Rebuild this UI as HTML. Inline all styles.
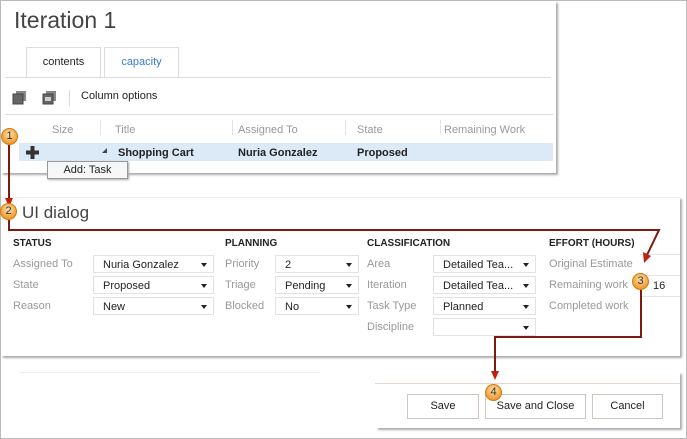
<!DOCTYPE html>
<html><head><meta charset="utf-8"><style>
*{box-sizing:border-box;margin:0;padding:0}
body{width:687px;height:439px;background:#fff;position:relative;overflow:hidden;font-family:"Liberation Sans",sans-serif;font-size:11px;color:#222}
.a{position:absolute;white-space:nowrap}
.frame{left:0;top:0;width:687px;height:439px;border:1px solid #bbb}
.lbl{color:#999;font-size:11px}
.hd{font-weight:bold;font-size:10px;color:#222}
.dd{position:absolute;height:18px;border:1px solid #e2e2e2;font-size:11px;padding:3px 0 0 9px;color:#222}
.dd:after{content:"";position:absolute;right:6px;top:7px;border-left:3px solid transparent;border-right:3px solid transparent;border-top:4px solid #222}
.btn{position:absolute;top:394px;height:25px;border:1px solid #cfc6bd;background:#fff;text-align:center;line-height:23px;font-size:11px;color:#222}
.num{position:absolute;width:17px;height:17px;border-radius:50%;background:radial-gradient(circle at 50% 35%,#fde3b0,#f4a644 60%,#e08a20);border:1px solid #d07a10;font-size:11px;text-align:center;line-height:15px;color:#333}
</style></head><body>
<div class="a frame"></div>
<!-- panel 1 -->
<div class="a" style="left:1px;top:1px;width:555px;height:172px;background:#fff;box-shadow:2px 2px 2px #aaa"></div>
<div class="a" style="left:14px;top:7px;font-size:23px;color:#444">Iteration 1</div>
<div class="a" style="left:26px;top:47px;width:75px;height:31px;border:1px solid #ddd;border-bottom:none;background:#fff;text-align:center;line-height:29px;font-size:11px">contents</div>
<div class="a" style="left:104px;top:47px;width:75px;height:30px;border:1px solid #ddd;border-bottom:none;text-align:center;line-height:29px;font-size:11px;color:#3a7bd5">capacity</div>
<div class="a" style="left:5px;top:77px;width:546px;height:1px;background:#ddd"></div>
<svg class="a" style="left:12px;top:90px" width="50" height="16">
<rect x="4" y="1" width="10" height="10" fill="#888"/><rect x="1" y="4" width="10" height="10" fill="#666" stroke="#444"/>
<rect x="34" y="1" width="10" height="10" fill="#888"/><rect x="31" y="4" width="10" height="10" fill="#666" stroke="#444"/><rect x="33" y="7" width="6" height="4" fill="#ccc"/>
</svg>
<div class="a" style="left:69px;top:90px;width:1px;height:16px;background:#ddd"></div>
<div class="a" style="left:81px;top:90px;font-size:11px">Column options</div>
<div class="a" style="left:5px;top:114px;width:548px;height:1px;background:#ddd"></div>
<div class="a lbl" style="left:52px;top:124px">Size</div>
<div class="a" style="left:100px;top:120px;width:1px;height:15px;background:#e4e4e4"></div>
<div class="a lbl" style="left:115px;top:124px">Title</div>
<div class="a" style="left:232px;top:120px;width:1px;height:15px;background:#e4e4e4"></div>
<div class="a lbl" style="left:238px;top:124px">Assigned To</div>
<div class="a" style="left:345px;top:120px;width:1px;height:15px;background:#e4e4e4"></div>
<div class="a lbl" style="left:357px;top:124px">State</div>
<div class="a" style="left:440px;top:120px;width:1px;height:15px;background:#e4e4e4"></div>
<div class="a lbl" style="left:444px;top:124px">Remaining Work</div>
<div class="a" style="left:19px;top:143px;width:534px;height:18px;background:#dce9f7"></div>
<svg class="a" style="left:26px;top:146px" width="13" height="13"><path d="M4.5 0H8.5V4.5H13V8.5H8.5V13H4.5V8.5H0V4.5H4.5Z" fill="#333"/></svg>
<div class="a" style="left:102px;top:148px;border-left:5px solid transparent;border-bottom:5px solid #444"></div>
<div class="a" style="left:118px;top:147px;font-weight:bold;font-size:11px">Shopping Cart</div>
<div class="a" style="left:238px;top:147px;font-weight:bold;font-size:11px">Nuria Gonzalez</div>
<div class="a" style="left:357px;top:147px;font-weight:bold;font-size:11px">Proposed</div>
<div class="a" style="left:47px;top:161px;width:81px;height:18px;border:1px solid #999;background:#f7f7f7;box-shadow:1px 1px 2px #aaa;text-align:center;line-height:16px;font-size:11px">Add: Task</div>
<!-- panel 2 -->
<div class="a" style="left:1px;top:197px;width:679px;height:159px;background:#fff;box-shadow:2px 2px 2px #aaa;border-top:1px solid #eee"></div>
<div class="a" style="left:22px;top:203px;font-size:17px;color:#444">UI dialog</div>
<div class="a hd" style="left:13px;top:238px">STATUS</div>
<div class="a hd" style="left:225px;top:238px">PLANNING</div>
<div class="a hd" style="left:367px;top:238px">CLASSIFICATION</div>
<div class="a hd" style="left:549px;top:238px">EFFORT (HOURS)</div>
<div class="a lbl" style="left:13px;top:258px">Assigned To</div>
<div class="a lbl" style="left:13px;top:279px">State</div>
<div class="a lbl" style="left:13px;top:300px">Reason</div>
<div class="dd" style="left:93px;top:255px;width:121px">Nuria Gonzalez</div>
<div class="dd" style="left:93px;top:276px;width:121px">Proposed</div>
<div class="dd" style="left:93px;top:297px;width:121px">New</div>
<div class="a lbl" style="left:225px;top:258px">Priority</div>
<div class="a lbl" style="left:225px;top:279px">Triage</div>
<div class="a lbl" style="left:225px;top:300px">Blocked</div>
<div class="dd" style="left:275px;top:255px;width:84px">2</div>
<div class="dd" style="left:275px;top:276px;width:84px">Pending</div>
<div class="dd" style="left:275px;top:297px;width:84px">No</div>
<div class="a lbl" style="left:367px;top:258px">Area</div>
<div class="a lbl" style="left:367px;top:279px">Iteration</div>
<div class="a lbl" style="left:367px;top:300px">Task Type</div>
<div class="a lbl" style="left:367px;top:321px">Discipline</div>
<div class="dd" style="left:433px;top:255px;width:103px">Detailed Tea...</div>
<div class="dd" style="left:433px;top:276px;width:103px">Detailed Tea...</div>
<div class="dd" style="left:433px;top:297px;width:103px">Planned</div>
<div class="dd" style="left:433px;top:318px;width:103px"></div>
<div class="a lbl" style="left:549px;top:258px">Original Estimate</div>
<div class="a lbl" style="left:549px;top:279px">Remaining work</div>
<div class="a lbl" style="left:549px;top:300px">Completed work</div>
<div class="a" style="left:640px;top:254px;width:40px;height:1px;background:#e4e4e4"></div>
<div class="a" style="left:640px;top:275px;width:40px;height:1px;background:#e4e4e4"></div>
<div class="a" style="left:640px;top:296px;width:40px;height:1px;background:#e4e4e4"></div>
<div class="a" style="left:653px;top:280px;font-size:11px">16</div>
<!-- panel 3 -->
<div class="a" style="left:376px;top:372px;width:304px;height:56px;background:#fff;box-shadow:2px 2px 2px #aaa"></div>
<div class="a" style="left:20px;top:372px;width:300px;height:1px;background:#eee"></div>
<div class="a" style="left:375px;top:383px;width:305px;height:1px;background:#e8d8d0"></div>
<div class="btn" style="left:407px;width:72px">Save</div>
<div class="btn" style="left:485px;width:101px">Save and Close</div>
<div class="btn" style="left:592px;width:71px">Cancel</div>
<!-- arrows -->
<svg class="a" style="left:0;top:0" width="687" height="439">
<g stroke="#7a1a10" stroke-width="2" fill="none">
<path d="M9 145 V200"/>
<path d="M9 220 V230 H659 L647 255"/>
<path d="M641 290 V337 H495 V372"/>
</g>
<g fill="#c02010">
<path d="M5 198 L13 198 L9 207 Z"/>
<path d="M643 252 L651 256 L644 263 Z"/>
<path d="M491 371 L499 371 L495 380 Z"/>
</g>
</svg>
<div class="num" style="left:1px;top:128px">1</div>
<div class="num" style="left:0px;top:203px">2</div>
<div class="num" style="left:632px;top:273px">3</div>
<div class="num" style="left:485px;top:384px">4</div>
</body></html>
